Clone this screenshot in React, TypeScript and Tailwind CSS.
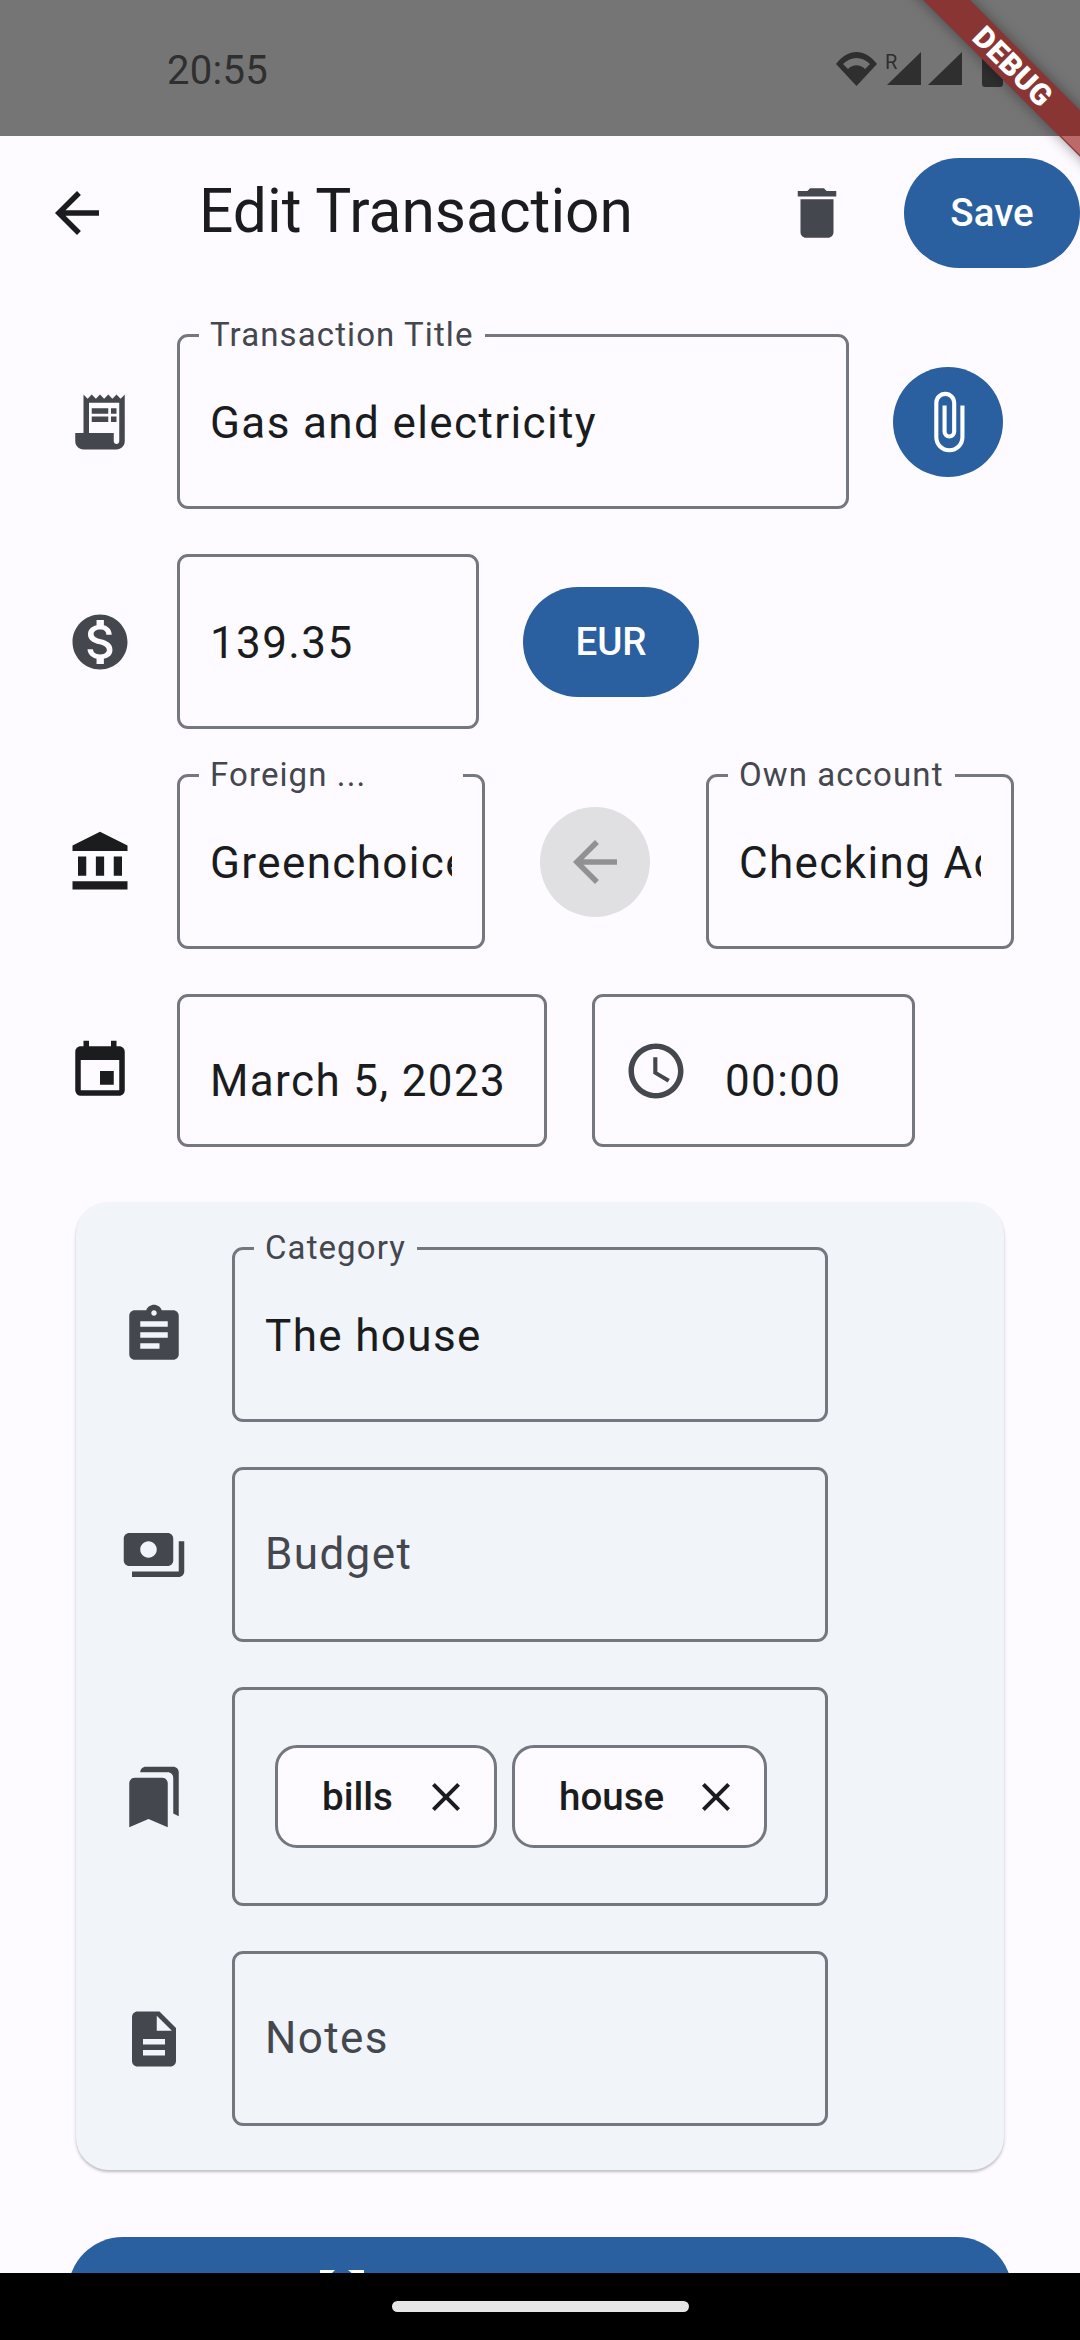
import { MdArrowBack, MdDelete, MdAttachFile, MdReceiptLong, MdMonetizationOn, MdAccountBalance, MdEvent, MdOutlineSchedule, MdAssignment, MdPayments, MdBookmarks, MdDescription, MdClose } from "react-icons/md";
import type { ReactNode } from "react";

function Field({ label, value, placeholder, w, h = "h-[175px]", notch = "bg-[#fdfbff]", children }: { label?: string; value?: string; placeholder?: string; w: string; h?: string; notch?: string; children?: ReactNode }) {
  return (
    <div className={`relative shrink-0 ${w} ${h} rounded-[11px] border-[3px] border-[#74777f] flex items-center px-[30px]`}>
      {label && (
        <span className={`absolute -top-[19px] left-[19px] px-[11px] ${notch} text-[33px] leading-[33px] tracking-[1.1px] text-[#44474e] whitespace-nowrap`}>{label}</span>
      )}
      {children ?? (
        <span className={`block overflow-hidden whitespace-nowrap text-[44px] tracking-[1.375px] ${placeholder ? "text-[#44474e] -mt-[2px]" : "text-[#1a1c1e] pt-[3px]"}`}>{value ?? placeholder}</span>
      )}
    </div>
  );
}

function Chip({ text, w }: { text: string; w: string }) {
  return (
    <div className={`${w} h-[103px] shrink-0 rounded-[22px] border-[3px] border-[#74777f] bg-[#fdfbff] flex items-center pl-[44px] pr-[24px] justify-between`}>
      <span className="text-[38.5px] font-medium text-[#1a1c1e]">{text}</span>
      <MdClose className="text-[48px] text-[#1a1c1e]" />
    </div>
  );
}

export default function App() {
  return (
    <div className="relative w-[1080px] h-[2340px] overflow-hidden flex flex-col bg-[#fdfbff] font-['Roboto',sans-serif]">
      <div className="h-[136px] shrink-0 bg-[#757575] flex items-center pl-[167px] pr-[77px] justify-between">
        <span className="text-[40px] text-[#2f2f2f] tracking-[0.3px] pt-[5px]">20:55</span>
        <svg width="167" height="38" viewBox="0 0 167 38" className="mt-[4px]" fill="#2f2f2f">
          <path fillRule="evenodd" d="M0 13 C 12 -3, 29 -3, 41 13 L20.5 35 Z M7 13 L12 18 C 17 13, 24 13, 29 18 L34 13 C 26 5, 15 5, 7 13 Z" />
          <text x="49" y="18" fontSize="20" fill="#2f2f2f" fontFamily="Roboto">R</text>
          <path d="M51 34 L85 1 V34 Z" />
          <path d="M92 34 L126 1 V34 Z" />
          <path d="M146 7 Q146 4 149 4 H153 V1 H160 V4 H164 Q167 4 167 7 V33 Q167 36 164 36 H149 Q146 36 146 33 Z" />
        </svg>
      </div>

      <div className="flex-1 min-h-0 overflow-hidden flex flex-col">
        <header className="h-[153px] shrink-0 flex items-center pl-[44px]">
          <MdArrowBack className="text-[66px] text-[#1a1c1e] shrink-0" />
          <h1 className="ml-[89px] text-[60.5px] leading-none text-[#1a1c1e] flex-1">Edit Transaction</h1>
          <MdDelete className="text-[66px] text-[#44474e] mr-[54px]" />
          <button className="w-[176px] h-[110px] rounded-[55px] bg-[#2a609f] text-white text-[38.5px] font-medium">Save</button>
        </header>

        <div className="mt-[45px] flex flex-col gap-[45px] pl-[67px]">
          <div className="flex items-center">
            <div className="w-[66px] mr-[44px] flex justify-center shrink-0"><MdReceiptLong className="text-[66px] text-[#44474e]" /></div>
            <Field label="Transaction Title" value="Gas and electricity" w="w-[672px]" />
            <button className="ml-[44px] w-[110px] h-[110px] rounded-full bg-[#2a609f] flex items-center justify-center"><MdAttachFile className="text-[66px] text-white" /></button>
          </div>

          <div className="flex items-center">
            <div className="w-[66px] mr-[44px] flex justify-center shrink-0"><MdMonetizationOn className="text-[66px] text-[#44474e]" /></div>
            <Field value="139.35" w="w-[302px]" />
            <button className="ml-[44px] w-[176px] h-[110px] rounded-[55px] bg-[#2a609f] text-white text-[38.5px] font-medium">EUR</button>
          </div>

          <div className="flex items-center">
            <div className="w-[66px] mr-[44px] flex justify-center shrink-0"><MdAccountBalance className="text-[66px] text-[#1a1c1e]" /></div>
            <div className="relative">
              <Field value="Greenchoice" w="w-[308px]" />
              <span className="absolute -top-[16px] left-[22px] w-[264px] pl-[11px] bg-[#fdfbff] text-[33px] leading-[33px] tracking-[1.1px] text-[#44474e] whitespace-nowrap">Foreign ...</span>
            </div>
            <button className="ml-[55px] w-[110px] h-[110px] rounded-full bg-[#e0e0e2] flex items-center justify-center"><MdArrowBack className="text-[66px] text-[#919193]" /></button>
            <div className="ml-[56px]"><Field label="Own account" value="Checking Account" w="w-[308px]" /></div>
          </div>

          <div className="flex items-center">
            <div className="w-[66px] mr-[44px] flex justify-center shrink-0"><MdEvent className="text-[66px] text-[#1a1c1e]" /></div>
            <Field w="w-[370px]" h="h-[153px]"><span className="text-[44px] tracking-[1.375px] text-[#1a1c1e] whitespace-nowrap pt-[20px]">March 5, 2023</span></Field>
            <div className="ml-[45px]">
              <Field w="w-[323px]" h="h-[153px]">
                <MdOutlineSchedule className="text-[66px] text-[#44474e] shrink-0 -ml-[2px]" />
                <span className="ml-[36px] text-[44px] tracking-[1.375px] text-[#1a1c1e] pt-[20px]">00:00</span>
              </Field>
            </div>
          </div>
        </div>

        <section className="mt-[55px] ml-[76px] w-[928px] shrink-0 rounded-[33px] bg-[#f1f4f9] shadow-[0_2px_3px_rgba(0,0,0,0.25)] pt-[45px] pb-[44px] pl-[45px] flex flex-col gap-[45px]">
          <div className="flex items-center">
            <div className="w-[66px] mr-[45px] flex justify-center shrink-0"><MdAssignment className="text-[66px] text-[#44474e]" /></div>
            <Field label="Category" value="The house" w="w-[596px]" notch="bg-[#f1f4f9]" />
          </div>
          <div className="flex items-center">
            <div className="w-[66px] mr-[45px] flex justify-center shrink-0"><MdPayments className="text-[66px] text-[#44474e]" /></div>
            <Field placeholder="Budget" w="w-[596px]" />
          </div>
          <div className="flex items-center">
            <div className="w-[66px] mr-[45px] flex justify-center shrink-0"><MdBookmarks className="text-[66px] text-[#44474e]" /></div>
            <Field w="w-[596px]" h="h-[219px]">
              <div className="flex items-center gap-[15px] ml-[10px]">
                <Chip text="bills" w="w-[222px]" />
                <Chip text="house" w="w-[255px]" />
              </div>
            </Field>
          </div>
          <div className="flex items-center">
            <div className="w-[66px] mr-[45px] flex justify-center shrink-0"><MdDescription className="text-[66px] text-[#44474e]" /></div>
            <Field placeholder="Notes" w="w-[596px]" />
          </div>
        </section>

        <button className="mt-[67px] ml-[68px] w-[944px] h-[110px] shrink-0 rounded-[55px] bg-[#2a609f] flex items-start justify-center pt-[33px] pr-[396px]">
          <svg width="44" height="12" viewBox="0 0 44 12" fill="#ffffff"><path d="M0 0 H15 L10 5 V12 H0 Z M28 0 H44 V12 H34 V5 Z" /></svg>
        </button>
      </div>

      <div className="h-[67px] shrink-0 bg-black flex items-center justify-center">
        <div className="w-[297px] h-[11px] rounded-full bg-[#e6e6e6]" />
      </div>

      <div className="absolute top-[50px] right-[-83px] w-[300px] h-[33px] rotate-45 bg-[#883534] shadow-[0_0_14px_rgba(0,0,0,0.4)] flex items-center justify-center">
        <span className="text-white font-black text-[30px] leading-none tracking-[0.5px]">DEBUG</span>
      </div>
      <svg width="19" height="19" viewBox="0 0 19 19" className="absolute top-[136px] right-0" fill="#b96a69"><path d="M0 0 H19 V19 Z" /></svg>
    </div>
  );
}
